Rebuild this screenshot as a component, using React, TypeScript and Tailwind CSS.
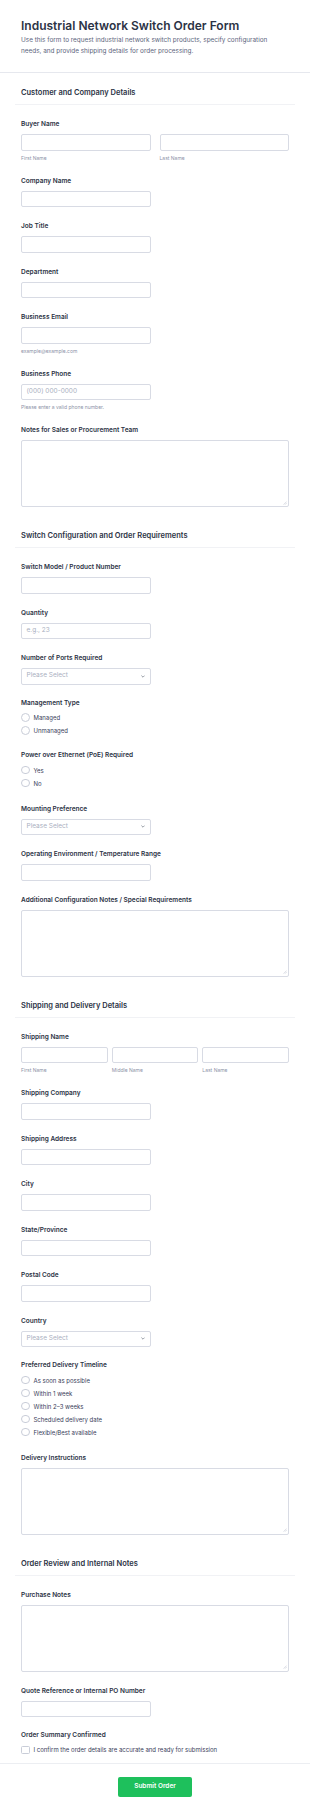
import type { ReactNode } from "react";

// Order form for industrial network switches. Everything here is drawn at a
// small scale, so sizes are mostly arbitrary pixel values.

function Label({ children }: { children: ReactNode }) {
  return (
    <div className="h-[10px] mb-[5px] flex items-center text-[6.5px] font-semibold text-[#2c3345] leading-[10px]">
      {children}
    </div>
  );
}

function SubLabel({ children }: { children: ReactNode }) {
  return <div className="mt-[4px] h-[7px] leading-[7px] text-[5px] text-[#8d93a8]">{children}</div>;
}

function TextInput({ placeholder, full }: { placeholder?: string; full?: boolean }) {
  return (
    <div
      className={`h-[16.5px] ${full ? "w-full" : "w-[130px]"} rounded-[2px] border border-[#d8dbe4] bg-white px-[4.5px] flex items-center text-[6.5px] text-[#a9afc0]`}
    >
      {placeholder}
    </div>
  );
}

function Select() {
  return (
    <div className="h-[16.5px] w-[130px] rounded-[2px] border border-[#d8dbe4] bg-white pl-[4.5px] pr-[5px] flex items-center justify-between text-[6.5px] text-[#a9afc0]">
      <span>Please Select</span>
      <svg width="4" height="3" viewBox="0 0 4 3" className="text-[#6b7280]">
        <path d="M0.4 0.6 L2 2.2 L3.6 0.6" fill="none" stroke="currentColor" strokeWidth="0.7" />
      </svg>
    </div>
  );
}

function TextArea() {
  return (
    <div className="relative h-[67px] w-full rounded-[2px] border border-[#d8dbe4] bg-white">
      <svg width="4" height="4" viewBox="0 0 4 4" className="absolute right-[1.5px] bottom-[1.5px] text-[#b5bac8]">
        <path d="M3.6 0.6 L0.6 3.6 M3.6 2.1 L2.1 3.6" stroke="currentColor" strokeWidth="0.5" />
      </svg>
    </div>
  );
}

function Field({ label, children }: { label: string; children: ReactNode }) {
  return (
    <div>
      <Label>{label}</Label>
      {children}
    </div>
  );
}

function Radios({ label, options }: { label: string; options: string[] }) {
  return (
    <div>
      <div className="h-[10px] mb-[2.5px] flex items-center text-[6.5px] font-semibold text-[#2c3345]">{label}</div>
      {options.map((o) => (
        <div key={o} className="h-[13px] flex items-center gap-[4px]">
          <span className="w-[8.5px] h-[8.5px] rounded-full border border-[#c9cdd8] bg-white shrink-0" />
          <span className="text-[6px] text-[#39405a]">{o}</span>
        </div>
      ))}
    </div>
  );
}

function Section({ title, first, children }: { title: string; first?: boolean; children: ReactNode }) {
  return (
    <section className={`px-[15px] ${first ? "pt-[15px]" : "pt-[24px]"}`}>
      <div className="border-b border-[#f1f2f5] px-[6px] pb-[6px]">
        <h2 className="h-[10px] flex items-center text-[7.5px] font-semibold text-[#2c3345]">{title}</h2>
      </div>
      <div className="px-[6px] pt-[14px] flex flex-col gap-[14px]">{children}</div>
    </section>
  );
}

export default function App() {
  return (
    <div className="w-[310px] min-h-[1812px] bg-white font-['Inter',sans-serif]">
      <header className="border-b border-[#e6e8ee] px-[21px] pt-[18px] pb-[15px]">
        <h1 className="text-[12px] leading-[15px] font-semibold text-[#2c3345]">Industrial Network Switch Order Form</h1>
        <p className="mt-[2px] text-[6.4px] leading-[11px] text-[#5d667e]">
          Use this form to request industrial network switch products, specify configuration needs, and provide
          shipping details for order processing.
        </p>
      </header>

      <Section title="Customer and Company Details" first>
        <Field label="Buyer Name">
          <div className="grid grid-cols-2 gap-[9px]">
            <div>
              <TextInput full />
              <SubLabel>First Name</SubLabel>
            </div>
            <div>
              <TextInput full />
              <SubLabel>Last Name</SubLabel>
            </div>
          </div>
        </Field>
        <Field label="Company Name">
          <TextInput />
        </Field>
        <Field label="Job Title">
          <TextInput />
        </Field>
        <Field label="Department">
          <TextInput />
        </Field>
        <Field label="Business Email">
          <TextInput />
          <SubLabel>example@example.com</SubLabel>
        </Field>
        <Field label="Business Phone">
          <TextInput placeholder="(000) 000-0000" />
          <SubLabel>Please enter a valid phone number.</SubLabel>
        </Field>
        <Field label="Notes for Sales or Procurement Team">
          <TextArea />
        </Field>
      </Section>

      <Section title="Switch Configuration and Order Requirements">
        <Field label="Switch Model / Product Number">
          <TextInput />
        </Field>
        <Field label="Quantity">
          <TextInput placeholder="e.g., 23" />
        </Field>
        <Field label="Number of Ports Required">
          <Select />
        </Field>
        <Radios label="Management Type" options={["Managed", "Unmanaged"]} />
        <Radios label="Power over Ethernet (PoE) Required" options={["Yes", "No"]} />
        <Field label="Mounting Preference">
          <Select />
        </Field>
        <Field label="Operating Environment / Temperature Range">
          <TextInput />
        </Field>
        <Field label="Additional Configuration Notes / Special Requirements">
          <TextArea />
        </Field>
      </Section>

      <Section title="Shipping and Delivery Details">
        <Field label="Shipping Name">
          <div className="grid grid-cols-3 gap-[4px]">
            {["First Name", "Middle Name", "Last Name"].map((s) => (
              <div key={s}>
                <TextInput full />
                <SubLabel>{s}</SubLabel>
              </div>
            ))}
          </div>
        </Field>
        <Field label="Shipping Company">
          <TextInput />
        </Field>
        <Field label="Shipping Address">
          <TextInput />
        </Field>
        <Field label="City">
          <TextInput />
        </Field>
        <Field label="State/Province">
          <TextInput />
        </Field>
        <Field label="Postal Code">
          <TextInput />
        </Field>
        <Field label="Country">
          <Select />
        </Field>
        <Radios
          label="Preferred Delivery Timeline"
          options={["As soon as possible", "Within 1 week", "Within 2–3 weeks", "Scheduled delivery date", "Flexible/Best available"]}
        />
        <Field label="Delivery Instructions">
          <TextArea />
        </Field>
      </Section>

      <Section title="Order Review and Internal Notes">
        <Field label="Purchase Notes">
          <TextArea />
        </Field>
        <Field label="Quote Reference or Internal PO Number">
          <TextInput />
        </Field>
        <div>
          <div className="h-[10px] mb-[4.5px] flex items-center text-[6.5px] font-semibold text-[#2c3345]">
            Order Summary Confirmed
          </div>
          <div className="h-[8.5px] flex items-center gap-[4px]">
            <span className="w-[8.5px] h-[8.5px] rounded-[1.5px] border border-[#c9cdd8] bg-white shrink-0" />
            <span className="text-[6px] text-[#39405a]">I confirm the order details are accurate and ready for submission</span>
          </div>
        </div>
      </Section>

      <footer className="mt-[8.5px] border-t border-[#eceef2] pt-[13px] pb-[16px] flex justify-center">
        <button className="w-[74px] h-[20px] rounded-[2px] bg-[#1ec05c] text-white text-[6.5px] font-semibold">
          Submit Order
        </button>
      </footer>
    </div>
  );
}
